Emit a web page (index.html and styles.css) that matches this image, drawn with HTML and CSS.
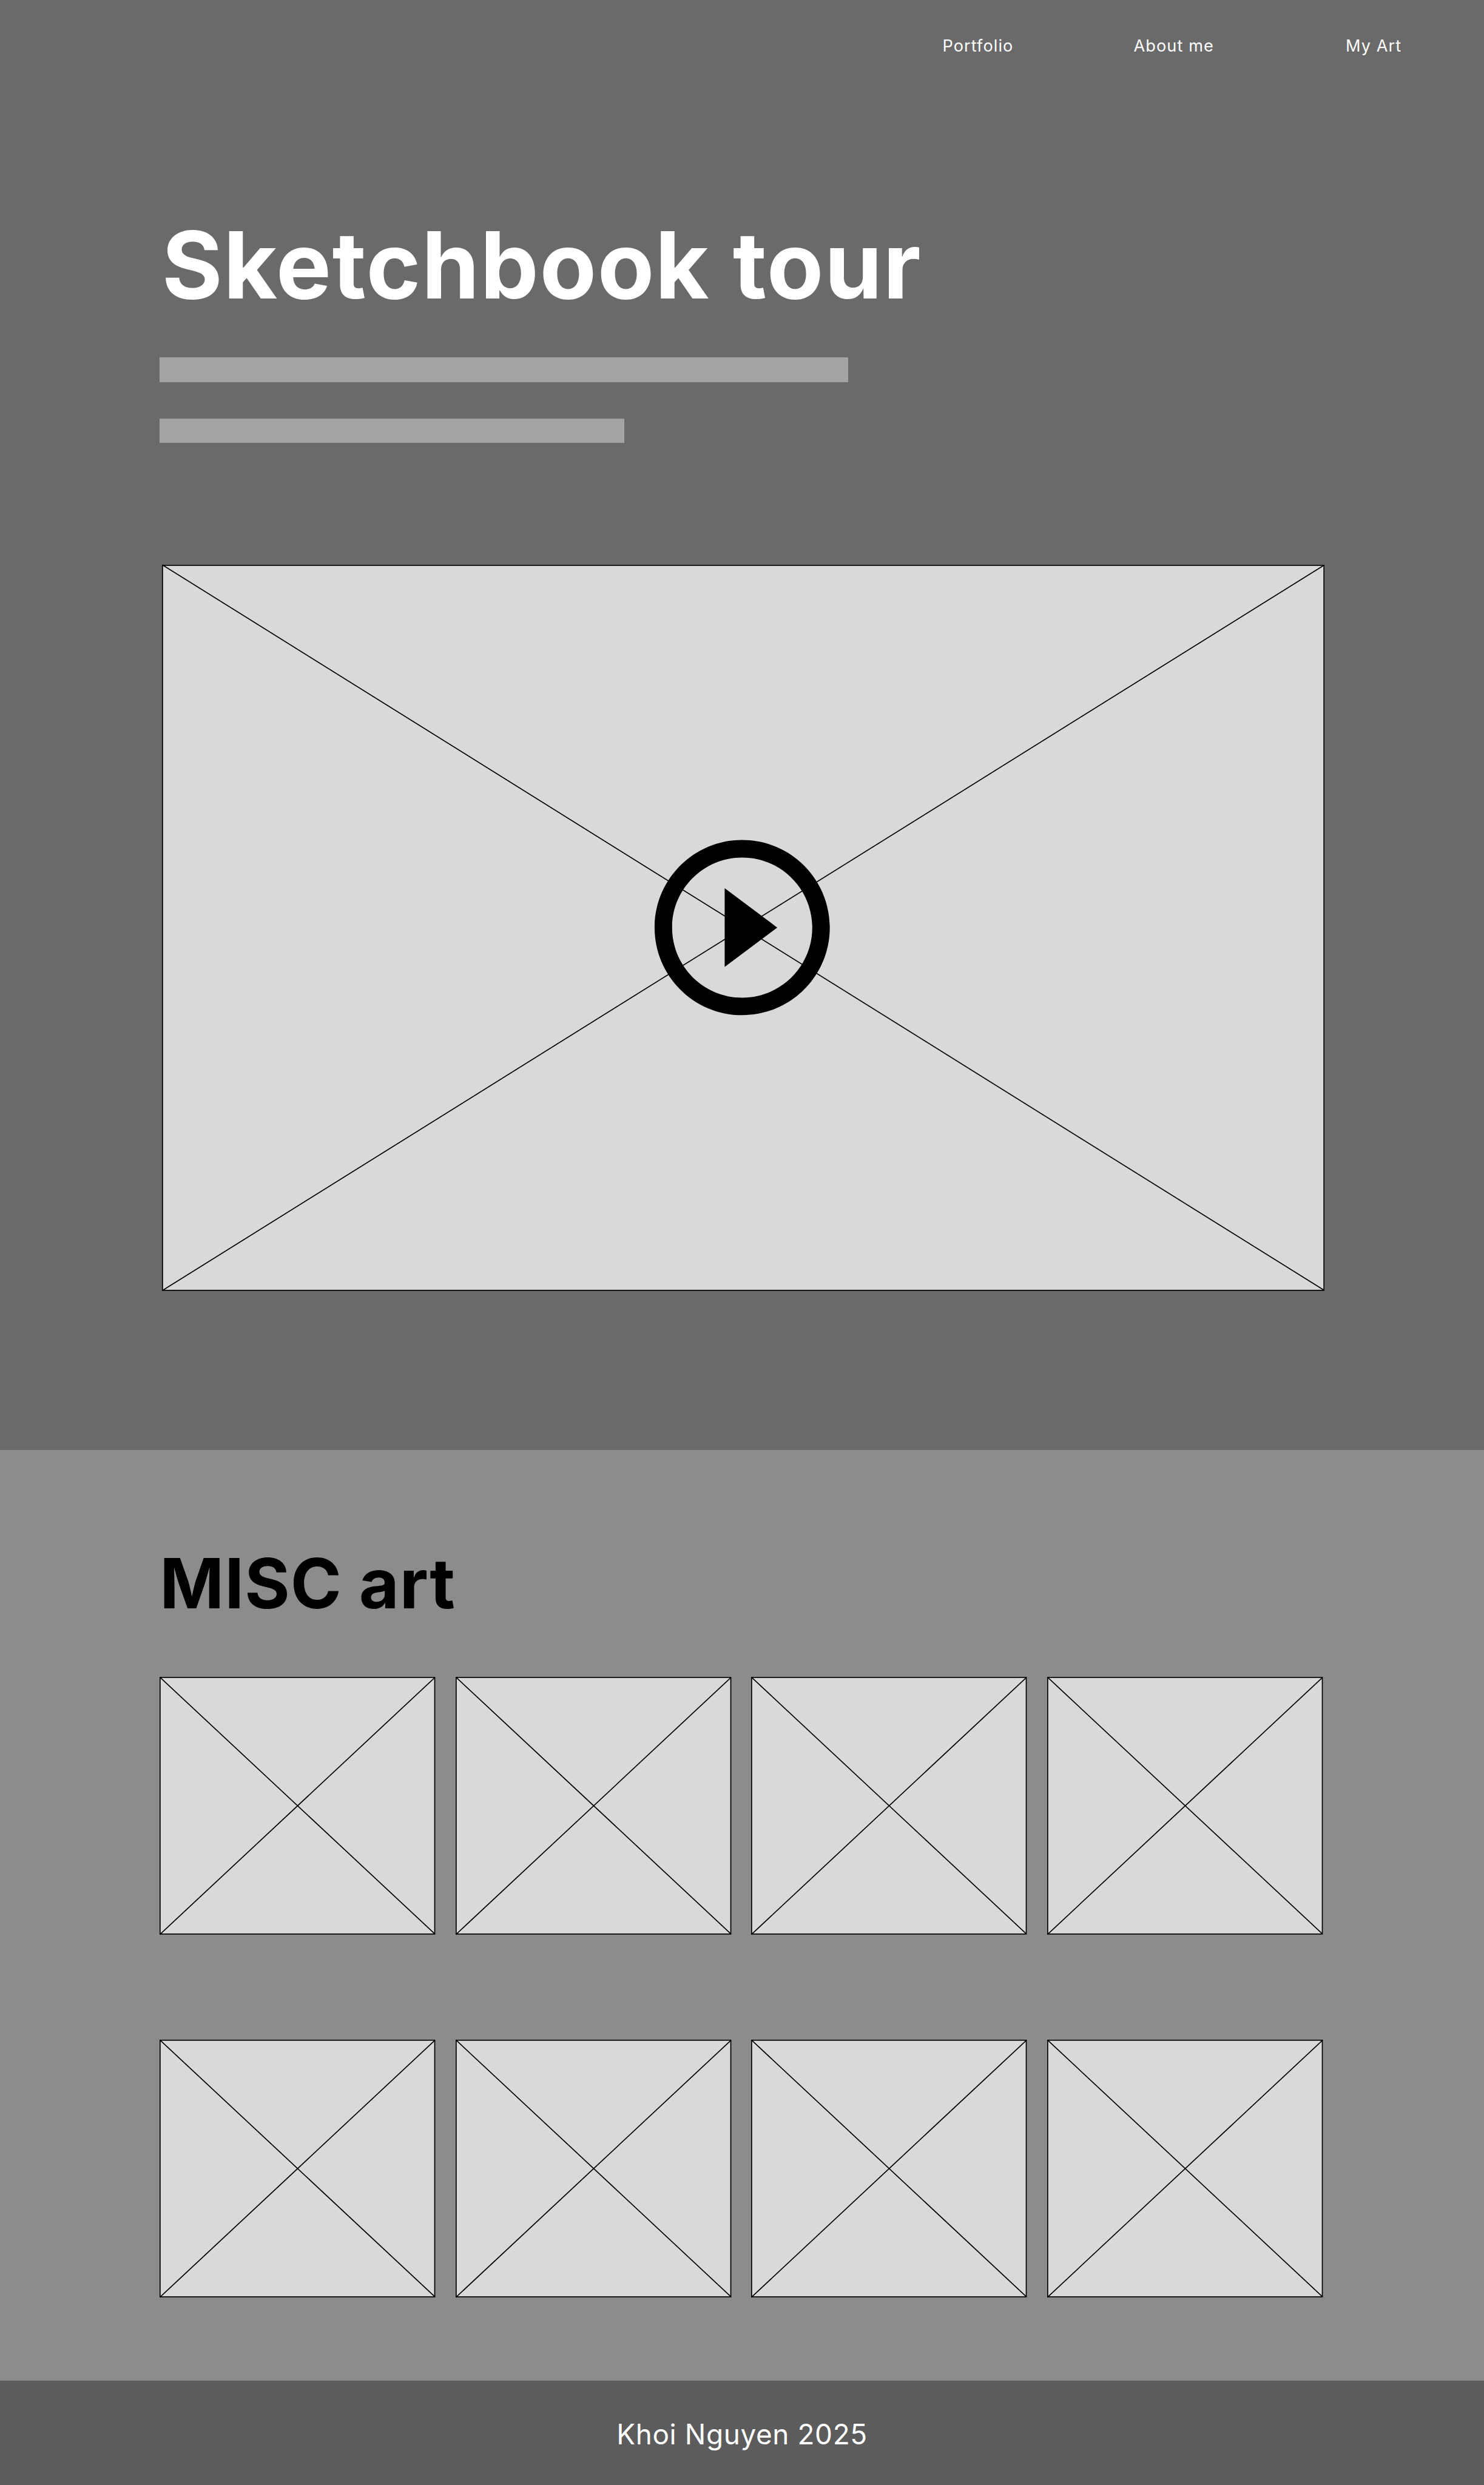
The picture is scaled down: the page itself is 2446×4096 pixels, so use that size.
FILE: index.html
```html
<!DOCTYPE html>
<html lang="en">
<head>
<meta charset="utf-8">
<title>Sketchbook tour – Khoi Nguyen</title>
<link rel="stylesheet" href="styles.css">
</head>
<body>
<svg class="defs" aria-hidden="true">
  <symbol id="thumb" viewBox="0 0 535 500" overflow="visible">
    <rect class="frame" x="1" y="1" width="533" height="498"/>
    <path class="cross" d="M.5 .5 534.5 499M.5 500 534.5 1"/>
  </symbol>
</svg>
<section class="hero">
  <nav class="nav">
    <a class="nav-link">Portfolio</a>
    <a class="nav-link">About me</a>
    <a class="nav-link">My Art</a>
  </nav>
  <h1 class="title">Sketchbook tour</h1>
  <div class="lines">
    <div class="line line-long"></div>
    <div class="line line-short"></div>
  </div>
  <svg class="video" viewBox="0 0 2256 1409">
    <rect class="frame" x="1" y="1" width="2254" height="1407"/>
    <path class="cross" d="M.5 0 2255.5 1408M.5 1408.5 2255.5 .5"/>
    <g transform="translate(922 500) scale(17)">
      <path d="M10 16.5l6-4.5-6-4.5v9zM12 2C6.48 2 2 6.48 2 12s4.48 10 10 10 10-4.48 10-10S17.52 2 12 2zm0 18c-4.41 0-8-3.59-8-8s3.59-8 8-8 8 3.59 8 8-3.59 8-8 8z"/>
    </g>
  </svg>
</section>
<section class="misc">
  <h2 class="misc-title">MISC art</h2>
  <div class="grid">
    <svg class="thumb"><use href="#thumb"/></svg>
    <svg class="thumb"><use href="#thumb"/></svg>
    <svg class="thumb"><use href="#thumb"/></svg>
    <svg class="thumb"><use href="#thumb"/></svg>
    <svg class="thumb"><use href="#thumb"/></svg>
    <svg class="thumb"><use href="#thumb"/></svg>
    <svg class="thumb"><use href="#thumb"/></svg>
    <svg class="thumb"><use href="#thumb"/></svg>
  </div>
</section>
<footer class="footer">Khoi Nguyen 2025</footer>
</body>
</html>
```
FILE: styles.css
```css
/* 1rem is 1/288 of the page width */
html {
  font-size: calc(100vw / 288);
}

* {
  box-sizing: border-box;
}

body {
  margin: 0;
  min-height: 100vh;
  display: flex;
  flex-direction: column;
  font-family: Inter, "Liberation Sans", sans-serif;
  line-height: 1;
  background: #5c5c5c;
}

.defs {
  display: block;
  width: 0;
  height: 0;
}

.hero {
  height: 281.4rem;
  padding-top: 7.3rem;
  background: #6a6a6a;
}

.nav {
  display: grid;
  grid-template-columns: 37.1rem 41.15rem auto;
  padding-left: 182.9rem;
  font-size: 3.2rem;
  letter-spacing: 0.04em;
  color: #fff;
}

.title {
  margin: 32rem 0 0 31.4rem;
  font-size: 18rem;
  font-weight: 700;
  letter-spacing: 0.175rem;
  color: #fff;
}

.lines {
  display: flex;
  flex-direction: column;
  gap: 7rem;
  margin: 8.9rem 0 0 31rem;
}

.line {
  height: 4.8rem;
  background: #a4a4a4;
}

.line-long {
  width: 133.6rem;
}

.line-short {
  width: 90.2rem;
}

.video {
  display: block;
  width: 225.6rem;
  height: 140.9rem;
  margin: 23.6rem 0 0 31.4rem;
  overflow: visible;
}

.frame {
  fill: #d9d9d9;
  stroke: #000;
  stroke-width: 2;
}

.cross {
  fill: none;
  stroke: #000;
  stroke-width: 2;
}

.misc {
  height: 180.6rem;
  padding: 19.2rem 31rem 0;
  background: #8c8c8c;
}

.misc-title {
  margin: 0;
  font-size: 13.4rem;
  font-weight: 700;
  letter-spacing: 0.115rem;
  color: #000;
}

.grid {
  display: grid;
  grid-template-columns: repeat(4, 53.5rem);
  gap: 20.4rem 3.9rem;
  margin-top: 11.4rem;
}

.thumb {
  display: block;
  width: 53.5rem;
  height: 50rem;
  overflow: visible;
}

.footer {
  flex: 1;
  padding-top: 7.8rem;
  text-align: center;
  font-size: 5.4rem;
  letter-spacing: 0.073rem;
  color: #fff;
}
```
